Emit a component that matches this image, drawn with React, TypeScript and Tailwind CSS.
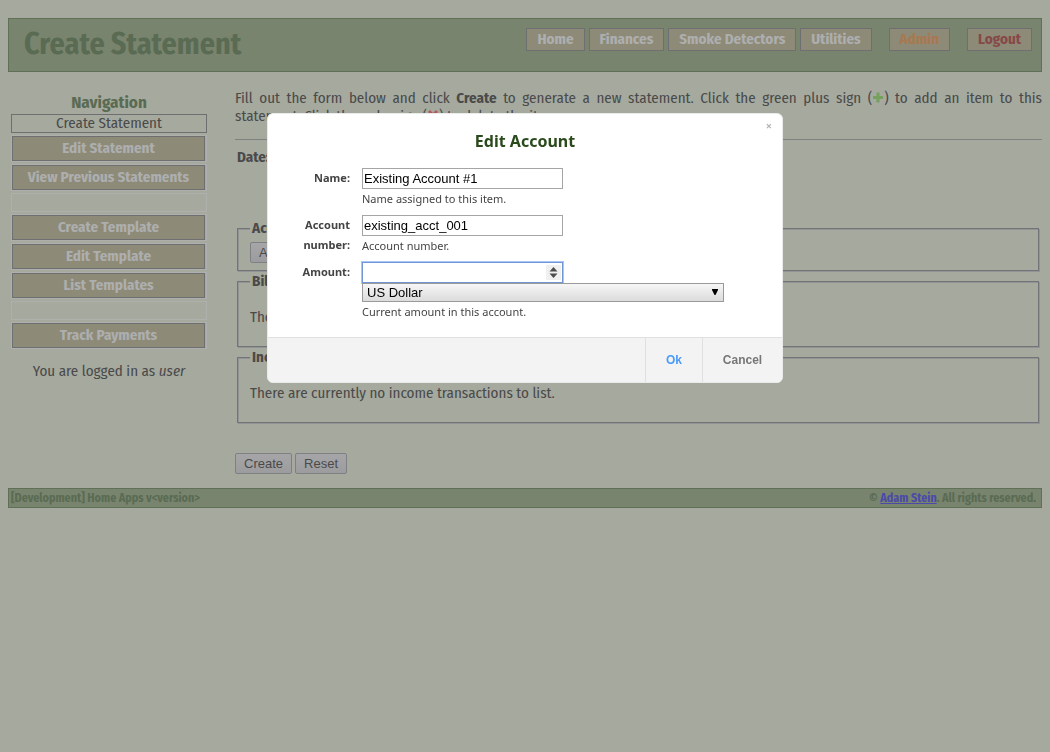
import { useId, type ReactNode } from "react";

const topLinks = ["Home", "Finances", "Smoke Detectors", "Utilities"];

const sideLinks = [
  "Edit Statement",
  "View Previous Statements",
  "",
  "Create Template",
  "Edit Template",
  "List Templates",
  "",
  "Track Payments",
];

const navButton =
  "h-[23px] border border-[#6e6f70] bg-[#8d8b77] px-[10px] leading-[20px] font-bold";

function Plus() {
  return (
    <svg viewBox="0 0 12 12" className="inline h-3 w-3 align-[-1px]" aria-label="plus">
      <path d="M4.500 0.500h3v3.500H11v3H7.500V10.500h-3V7H1V4h3.500z" fill="#75a05d" />
    </svg>
  );
}

function Cross() {
  return (
    <svg viewBox="0 0 12 12" className="inline h-3 w-3 align-[-1px]" aria-label="delete">
      <path d="M3 0l3 3 3-3 2 2-3 3 3 3-2 2-3-3-3 3-2-2 3-3-3-3z" fill="#b05a5a" />
    </svg>
  );
}

function Header() {
  return (
    <header className="flex items-start justify-between border border-[#5f7056] bg-[#79846e] pt-[9px] pr-[9px] pb-[7px] pl-[15px]">
      <h1 className="text-[30px] leading-8 font-bold text-[#5a6b53]">Create Statement</h1>
      <nav className="flex gap-1 pb-[13px] text-[15px] text-[#adaeaf]">
        {topLinks.map((t) => (
          <a key={t} href="#" className={navButton}>
            {t}
          </a>
        ))}
        <a href="#" className={navButton + " ml-[13px] text-[#a87850]"}>
          Admin
        </a>
        <a href="#" className={navButton + " ml-[13px] text-[#874848]"}>
          Logout
        </a>
      </nav>
    </header>
  );
}

function Sidebar() {
  return (
    <aside className="w-[196px] shrink-0 text-center">
      <h2 className="text-[17px] leading-[22px] font-bold text-[#5a6b53]">Navigation</h2>
      <ul className="flex flex-col gap-[2px]">
        <li className="h-[19px] border border-[#6e6f70] leading-[17px]">Create Statement</li>
        {sideLinks.map((t, i) =>
          t ? (
            <li key={i} className="h-[27px] border border-[#afb0ad] pr-px">
              <a
                href="#"
                className="block h-[25px] border border-[#6e6f70] bg-[#8d8b77] leading-[23px] font-bold text-[#adaeaf]"
              >
                {t}
              </a>
            </li>
          ) : (
            <li key={i} className="h-[19px] border border-[#afb0ad]" />
          ),
        )}
      </ul>
      <p className="mt-[13px]">
        You are logged in as <em>user</em>
      </p>
    </aside>
  );
}

function PageButton({ children }: { children: ReactNode }) {
  return (
    <button
      type="button"
      className="h-[21px] rounded-[2px] border border-[#7f8083] bg-linear-to-b from-[#a6a6a8] to-[#9c9c9f] px-2 font-['Liberation_Sans',sans-serif] text-[13px] leading-[19px]"
    >
      {children}
    </button>
  );
}

function Section({ title, children }: { title: string; children: ReactNode }) {
  return (
    <fieldset className="mr-[3px] mb-px ml-[2px] border border-[#737477] px-3 shadow-[1px_1px_0_#929395,inset_1px_1px_0_#929395]">
      <legend className="bg-[#a5a99e] px-[2px] font-bold">{title}</legend>
      {children}
    </fieldset>
  );
}

function Content() {
  return (
    <main className="min-w-0 flex-1">
      <p className="text-justify">
        Fill out the form below and click <b>Create</b> to generate a new statement. Click the green
        plus sign (<Plus />) to add an item to this statement.&nbsp;Click the red x sign (<Cross />)
        to delete the item.
      </p>
      <hr className="mt-[14px] border-t border-[#7f8082]" />
      <p className="mt-2 px-[2px] font-bold">Date:</p>
      <form className="mt-[53px]">
        <Section title="Accounts">
          <div className="flex pt-[5px] pb-[7px]">
            <PageButton>Add Account</PageButton>
          </div>
        </Section>
        <Section title="Bills">
          <p className="pt-[18px] pb-5">There are currently no bill transactions to list.</p>
        </Section>
        <Section title="Income">
          <p className="pt-[18px] pb-5">There are currently no income transactions to list.</p>
        </Section>
        <div className="mt-[30px] flex gap-[3px]">
          <PageButton>Create</PageButton>
          <PageButton>Reset</PageButton>
        </div>
      </form>
    </main>
  );
}

function Field({
  label,
  help,
  children,
}: {
  label: string;
  help: string;
  children: (id: string) => ReactNode;
}) {
  const id = useId();
  return (
    <div className="flex gap-3">
      <label htmlFor={id} className="w-[60px] shrink-0 text-right leading-5 font-bold">
        {label}
      </label>
      <div className="flex-1">
        {children(id)}
        <p className="leading-5">{help}</p>
      </div>
    </div>
  );
}

const inputClass =
  "block h-[21px] w-[201px] border border-[#a5a5a5] bg-white px-px font-['Liberation_Sans',sans-serif] text-[13px] text-black outline-none";

function Dialog() {
  return (
    <div className="fixed inset-0 flex items-start justify-center pt-[113px]">
      <div
        role="dialog"
        aria-labelledby="dialog-title"
        className="relative w-[516px] overflow-hidden rounded-[6px] border border-[#e9eaea] bg-white font-['Noto_Sans',sans-serif] text-[11px] text-[#444444]"
      >
        <button
          type="button"
          aria-label="Close"
          className="absolute top-[6px] right-[9px] h-3 w-2 text-[11px] leading-3 font-bold text-[#b5b5b5]"
        >
          ×
        </button>
        <h2
          id="dialog-title"
          className="pt-4 text-center text-[16px] leading-[22px] font-bold text-[#2b4a1c]"
        >
          Edit Account
        </h2>
        <form className="flex flex-col gap-[6px] pt-4 pr-[58px] pb-[15px] pl-[22px]">
          <Field label="Name:" help="Name assigned to this item.">
            {(id) => <input id={id} className={inputClass} defaultValue="Existing Account #1" />}
          </Field>
          <Field label="Account number:" help="Account number.">
            {(id) => <input id={id} className={inputClass} defaultValue="existing_acct_001" />}
          </Field>
          <Field label="Amount:" help="Current amount in this account.">
            {(id) => (
              <>
                <div className="relative w-[201px]">
                  <input
                    id={id}
                    inputMode="decimal"
                    className="block h-[21px] w-full border border-[#6f96d6] bg-white px-px text-[13px] ring-1 ring-[#a9c7f5] outline-none"
                  />
                  <svg
                    viewBox="0 0 15 15"
                    className="absolute top-[3px] right-[2px] h-[15px] w-[15px] bg-[#f0f0f0]"
                    aria-hidden="true"
                  >
                    <path d="M7.500 2L11.500 6.500h-8zM3.500 8.500h8L7.500 13z" fill="#4d4d4d" />
                  </svg>
                </div>
                <div className="relative">
                  <select
                    aria-label="Currency"
                    className="block h-[19px] w-full appearance-none border border-[#9a9a9a] bg-linear-to-b from-[#f6f6f6] to-[#dcdcdc] px-1 font-['Liberation_Sans',sans-serif] text-[13px] leading-[17px] text-black"
                  >
                    <option>US Dollar</option>
                  </select>
                  <svg
                    viewBox="0 0 6 6"
                    className="pointer-events-none absolute top-[6px] right-[6px] h-[6px] w-[6px]"
                    aria-hidden="true"
                  >
                    <path d="M0 0h6v1L3.500 6h-1L0 1z" fill="#000" />
                  </svg>
                </div>
              </>
            )}
          </Field>
        </form>
        <div className="flex h-[45px] justify-end border-t border-[#e0e0e0] bg-[#f3f3f3] font-['Liberation_Sans',sans-serif] text-[12px] font-bold">
          <button type="button" className="w-[57px] border-l border-[#e0e0e0] text-[#4a9bfa]">
            Ok
          </button>
          <button type="button" className="w-[80px] border-l border-[#e0e0e0] text-[#777777]">
            Cancel
          </button>
        </div>
      </div>
    </div>
  );
}

export default function App() {
  return (
    <div className="min-h-screen bg-[#a5a99e] px-2 pt-[18px] font-['Fira_Sans_Condensed','Roboto_Condensed',Lato,sans-serif] text-[15px] leading-[18px] text-[#4a4a4a]">
      <Header />
      <div className="mt-[17px] flex gap-7 pb-[14px] pl-[3px]">
        <div className="pt-[3px]">
          <Sidebar />
        </div>
        <Content />
      </div>
      <footer className="flex h-5 items-center justify-between border border-[#5f7056] bg-[#79846e] pr-[5px] pl-[2px] text-[12px] font-bold text-[#5a6b53]">
        <span>[Development] Home Apps v&lt;version&gt;</span>
        <span>
          ©{" "}
          <a href="#" className="text-[#4a4aa8] underline">
            Adam Stein
          </a>
          . All rights reserved.
        </span>
      </footer>
      <Dialog />
    </div>
  );
}
